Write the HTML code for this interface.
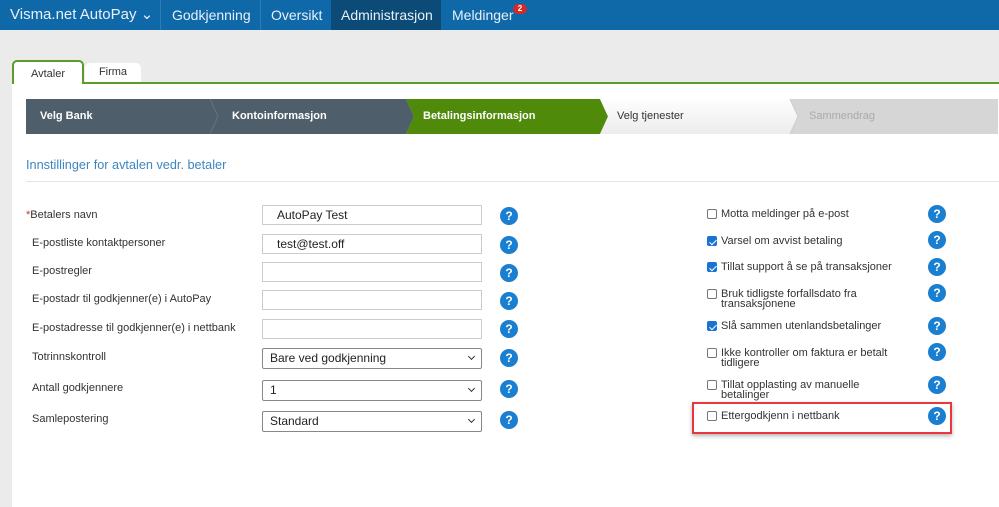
<!DOCTYPE html>
<html><head><meta charset="utf-8"><style>
*{box-sizing:border-box;margin:0;padding:0}
body{width:999px;height:507px;overflow:hidden;background:#ebebeb;font-family:"Liberation Sans",sans-serif;position:relative}
.abs{position:absolute}
.nav{left:0;top:0;width:999px;height:30px;background:#0f68a8}
.nav div{position:absolute;top:0;height:30px;line-height:30px;color:#e8f1f8;font-size:14px;white-space:nowrap}
.sep{width:1px;background:#2c7cb6;top:0!important}
.panel{left:12px;top:82px;width:987px;height:425px;background:#fff;border-top:2px solid #5a9e26}
.tab{top:60px;height:24px;background:#fff;font-size:11px;color:#333;text-align:center;line-height:24px;border-radius:5px 5px 0 0}
.step{top:99px;height:35px;line-height:35px;font-size:11px;font-weight:bold;color:#fff}
.lbl{font-size:11px;color:#333;left:32px}
.inp{left:262px;width:220px;height:20px;border:1px solid #ccc;background:#fff;font-size:12px;color:#222;line-height:18px;padding-left:14px}
.sel{left:262px;width:220px;height:21px;border:1px solid #888;border-radius:2px;background:#fff;font-size:12px;color:#222;line-height:19px;padding-left:7px}
.sel:after{content:"";position:absolute;right:7px;top:5px;width:4px;height:4px;border-right:1.5px solid #333;border-bottom:1.5px solid #333;transform:rotate(45deg)}
.q{width:18px;height:18px;border-radius:50%;background:#1a7fd0;color:#fff;font-size:12px;font-weight:bold;text-align:center;line-height:18px}
.cb{left:707px;width:10px;height:10px;border:1px solid #777;border-radius:2px;background:#fff}
.cb.on{background:#1a73d0;border-color:#1a73d0}
.cb.on:after{content:"";position:absolute;left:2.5px;top:0.5px;width:3px;height:6px;border-right:1.5px solid #fff;border-bottom:1.5px solid #fff;transform:rotate(45deg)}
.ct{left:721px;font-size:11px;color:#333;line-height:10px;width:180px}
</style></head><body>
<div class="abs nav">
<div style="left:10px;font-size:15px">Visma.net AutoPay ⌄</div>
<div class="sep" style="left:160px"></div>
<div style="left:172px">Godkjenning</div>
<div class="sep" style="left:260px"></div>
<div style="left:271px">Oversikt</div>
<div style="left:331px;width:110px;background:#0c4a78;padding-left:10px">Administrasjon</div>
<div style="left:452px">Meldinger</div>
<div style="left:513px;top:4px;height:10px;width:14px;line-height:10px;border-radius:5px;background:#d42a2a;font-size:8px;font-weight:bold;text-align:center;color:#fff">2</div>
</div>
<div class="abs panel"></div>
<div class="abs tab" style="left:12px;width:72px;border:2px solid #5a9e26;border-bottom:none">Avtaler</div>
<div class="abs tab" style="left:85px;top:63px;width:56px;height:19px;line-height:19px">Firma</div>
<svg class="abs" style="left:26px;top:99px" width="972" height="35">
<defs><linearGradient id="g" x1="0" y1="0" x2="0" y2="1"><stop offset="0" stop-color="#fefefe"/><stop offset="1" stop-color="#ececec"/></linearGradient></defs>
<rect x="0" y="0" width="972" height="35" fill="#d6d6d6"/>
<polygon points="0,0 184,0 192,17.5 184,35 0,35" fill="#4e5f6b"/>
<polygon points="184,0 380,0 388,17.5 380,35 184,35 192,17.5" fill="#4e5f6b"/>
<line x1="184" y1="0" x2="192" y2="17.5" stroke="#66737d"/><line x1="192" y1="17.5" x2="184" y2="35" stroke="#66737d"/>
<polygon points="380,0 574,0 582,17.5 574,35 380,35 388,17.5" fill="#4f8a0a"/>
<polygon points="574,0 764,0 772,17.5 764,35 574,35 582,17.5" fill="url(#g)"/>
<line x1="764" y1="0" x2="772" y2="17.5" stroke="#ccc"/><line x1="772" y1="17.5" x2="764" y2="35" stroke="#ccc"/>
</svg>
<div class="abs step" style="left:40px">Velg Bank</div>
<div class="abs step" style="left:232px">Kontoinformasjon</div>
<div class="abs step" style="left:423px">Betalingsinformasjon</div>
<div class="abs step" style="left:617px;color:#333;font-weight:normal">Velg tjenester</div>
<div class="abs step" style="left:809px;color:#aaa;font-weight:normal">Sammendrag</div>
<div class="abs" style="left:26px;top:158px;font-size:12.7px;color:#3d86c0">Innstillinger for avtalen vedr. betaler</div>
<div class="abs" style="left:26px;top:181px;width:973px;height:1px;background:#e4e4e4"></div>

<div class="abs lbl" style="top:209px;left:26px"><span style="color:#c33">*</span>Betalers navn</div>
<div class="abs lbl" style="top:237px">E-postliste kontaktpersoner</div>
<div class="abs lbl" style="top:265px">E-postregler</div>
<div class="abs lbl" style="top:293px">E-postadr til godkjenner(e) i AutoPay</div>
<div class="abs lbl" style="top:322px">E-postadresse til godkjenner(e) i nettbank</div>
<div class="abs lbl" style="top:351px">Totrinnskontroll</div>
<div class="abs lbl" style="top:382px">Antall godkjennere</div>
<div class="abs lbl" style="top:413px">Samlepostering</div>

<div class="abs inp" style="top:205px">AutoPay Test</div>
<div class="abs inp" style="top:234px">test@test.off</div>
<div class="abs inp" style="top:262px"></div>
<div class="abs inp" style="top:290px"></div>
<div class="abs inp" style="top:319px"></div>
<div class="abs sel" style="top:348px">Bare ved godkjenning</div>
<div class="abs sel" style="top:380px">1</div>
<div class="abs sel" style="top:411px">Standard</div>

<div class="abs q" style="left:500px;top:207px">?</div>
<div class="abs q" style="left:500px;top:236px">?</div>
<div class="abs q" style="left:500px;top:264px">?</div>
<div class="abs q" style="left:500px;top:292px">?</div>
<div class="abs q" style="left:500px;top:320px">?</div>
<div class="abs q" style="left:500px;top:349px">?</div>
<div class="abs q" style="left:500px;top:380px">?</div>
<div class="abs q" style="left:500px;top:411px">?</div>

<div class="abs cb" style="top:209px"></div><div class="abs ct" style="top:209px">Motta meldinger på e-post</div>
<div class="abs cb on" style="top:236px"></div><div class="abs ct" style="top:236px">Varsel om avvist betaling</div>
<div class="abs cb on" style="top:262px"></div><div class="abs ct" style="top:262px">Tillat support å se på transaksjoner</div>
<div class="abs cb" style="top:289px"></div><div class="abs ct" style="top:289px">Bruk tidligste forfallsdato fra transaksjonene</div>
<div class="abs cb on" style="top:321px"></div><div class="abs ct" style="top:321px">Slå sammen utenlandsbetalinger</div>
<div class="abs cb" style="top:348px"></div><div class="abs ct" style="top:348px">Ikke kontroller om faktura er betalt tidligere</div>
<div class="abs cb" style="top:380px"></div><div class="abs ct" style="top:380px">Tillat opplasting av manuelle betalinger</div>
<div class="abs cb" style="top:411px"></div><div class="abs ct" style="top:411px">Ettergodkjenn i nettbank</div>

<div class="abs q" style="left:928px;top:205px">?</div>
<div class="abs q" style="left:928px;top:231px">?</div>
<div class="abs q" style="left:928px;top:258px">?</div>
<div class="abs q" style="left:928px;top:284px">?</div>
<div class="abs q" style="left:928px;top:317px">?</div>
<div class="abs q" style="left:928px;top:343px">?</div>
<div class="abs q" style="left:928px;top:376px">?</div>
<div class="abs q" style="left:928px;top:407px">?</div>
<div class="abs" style="left:692px;top:402px;width:260px;height:32px;border:2px solid #e8383d;box-shadow:0 2px 4px rgba(0,0,0,.3)"></div>
</body></html>
